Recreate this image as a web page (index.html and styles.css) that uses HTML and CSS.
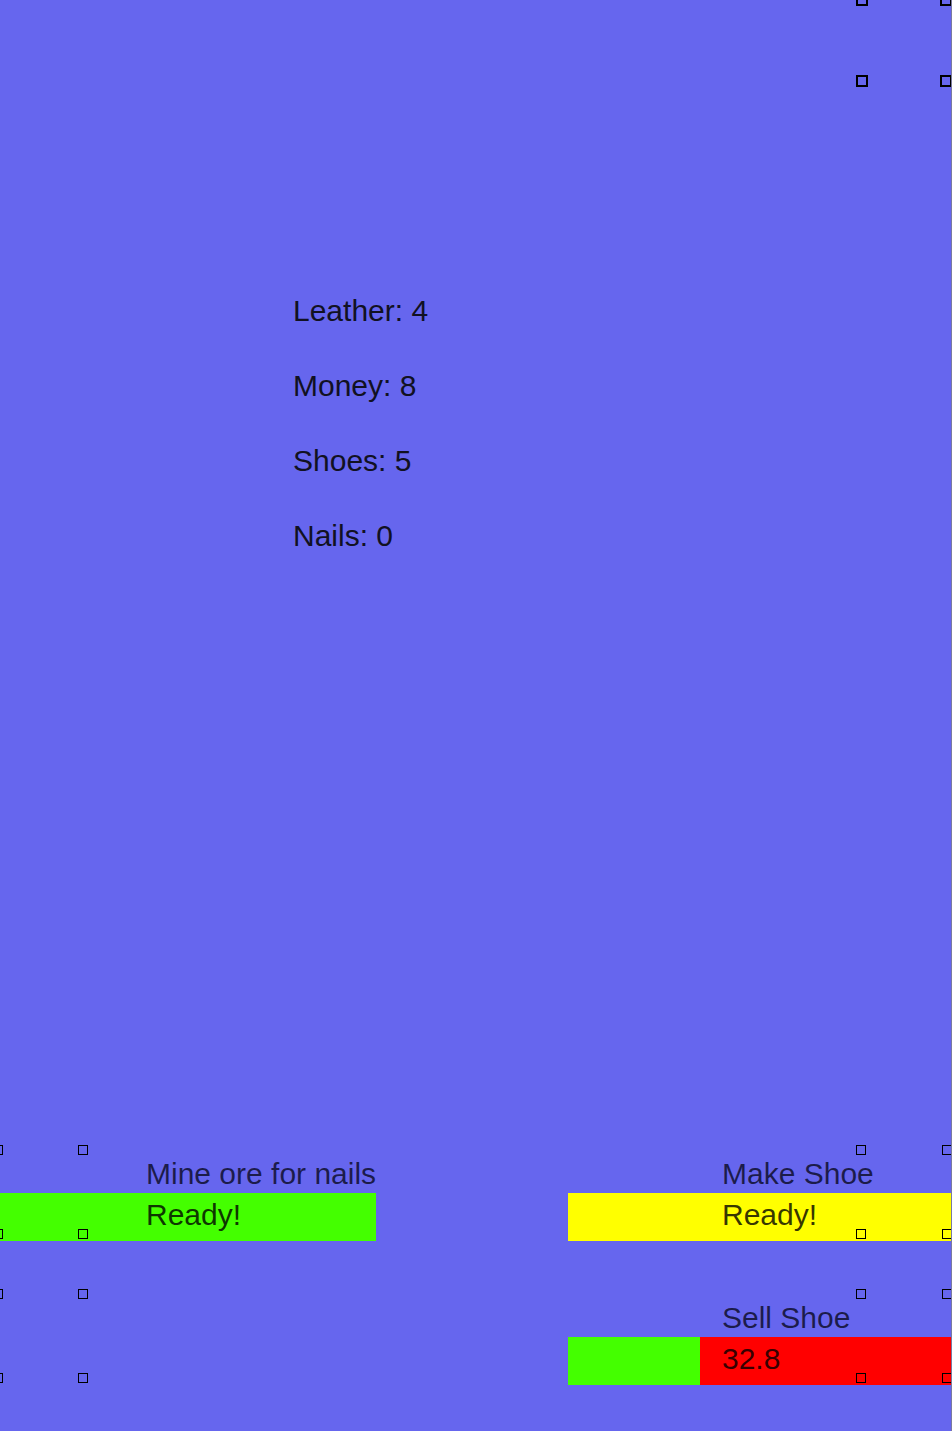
FILE: index.html
```html
<!DOCTYPE html>
<html lang="en">
<head>
<meta charset="utf-8">
<title>Shoe Maker</title>
<link rel="stylesheet" href="styles.css">
</head>
<body>
<div class="page">
  <div class="stats">
    <div class="stat">Leather: 4</div>
    <div class="stat">Money: 8</div>
    <div class="stat">Shoes: 5</div>
    <div class="stat">Nails: 0</div>
  </div>

  <div class="actions">
    <div class="col">
      <div class="widget">
        <div class="label">Mine ore for nails</div>
        <div class="bar bar-green"><span class="bar-text">Ready!</span></div>
      </div>
    </div>
    <div class="col col-right">
      <div class="widget">
        <div class="label">Make Shoe</div>
        <div class="bar bar-yellow"><span class="bar-text">Ready!</span></div>
      </div>
      <div class="widget">
        <div class="label">Sell Shoe</div>
        <div class="bar bar-red">
          <div class="fill" style="width: 34.4%"></div>
          <span class="bar-text">32.8</span>
        </div>
      </div>
    </div>
  </div>

  <div class="grp grp-top big"><i class="h tl"></i><i class="h tr"></i><i class="h bl"></i><i class="h br"></i></div>
  <div class="grp grp-l1"><i class="h tl"></i><i class="h tr"></i><i class="h bl"></i><i class="h br"></i></div>
  <div class="grp grp-l2"><i class="h tl"></i><i class="h tr"></i><i class="h bl"></i><i class="h br"></i></div>
  <div class="grp grp-r1"><i class="h tl"></i><i class="h tr"></i><i class="h bl"></i><i class="h br"></i></div>
  <div class="grp grp-r2"><i class="h tl"></i><i class="h tr"></i><i class="h bl"></i><i class="h br"></i></div>
</div>
</body>
</html>
```
FILE: styles.css
```css
html, body {
  margin: 0;
  padding: 0;
  background: #6666ee;
}
body {
  font-family: "Liberation Sans", Arial, sans-serif;
  overflow: hidden;
}
.page {
  position: relative;
  width: 952px;
  height: 1431px;
  box-sizing: border-box;
  border-right: 1px solid #7a7aa0;
  display: flex;
  flex-direction: column;
  overflow: hidden;
}
.stats {
  display: flex;
  flex-direction: column;
  gap: 30px;
  padding-top: 288px;
  padding-left: 293px;
}
.stat {
  font-size: 30px;
  line-height: 45px;
  color: #111122;
}
.actions {
  margin-top: auto;
  margin-left: -8px;
  width: 960px;
  padding-bottom: 46px;
  display: flex;
  justify-content: space-between;
  align-items: flex-start;
}
.col {
  width: 384px;
  display: flex;
  flex-direction: column;
  gap: 59px;
}
.widget {
  display: flex;
  flex-direction: column;
  gap: 1px;
}
.label {
  font-size: 30px;
  line-height: 36px;
  padding-left: 154px;
  color: rgba(0, 0, 10, 0.72);
  white-space: nowrap;
}
.bar {
  position: relative;
  height: 48px;
  font-size: 30px;
  line-height: 44px;
  display: flex;
}
.bar-green { background: #44ff00; }
.bar-yellow { background: #ffff00; }
.bar-red { background: #ff0000; }
.fill {
  position: absolute;
  left: 0;
  top: 0;
  bottom: 0;
  background: #44ff00;
}
.bar-text {
  position: relative;
  padding-left: 154px;
  color: rgba(0, 0, 0, 0.8);
}

/* resize handles overlaying the canvas */
.grp {
  position: absolute;
}
.grp-top { left: 862px; top: 0; width: 84px; height: 81px; }
.grp-l1 { left: -2px; top: 1150px; width: 85px; height: 84px; }
.grp-l2 { left: -2px; top: 1294px; width: 85px; height: 84px; }
.grp-r1 { left: 861px; top: 1150px; width: 86px; height: 84px; }
.grp-r2 { left: 861px; top: 1294px; width: 86px; height: 84px; }
.h {
  position: absolute;
  width: 10px;
  height: 10px;
  box-sizing: border-box;
  border: 1px solid #000;
}
.tl { left: -5px; top: -5px; }
.tr { right: -5px; top: -5px; }
.bl { left: -5px; bottom: -5px; }
.br { right: -5px; bottom: -5px; }
.big .h {
  width: 12px;
  height: 12px;
  border-width: 2px;
}
.big .tl { left: -6px; top: -6px; }
.big .tr { right: -6px; top: -6px; }
.big .bl { left: -6px; bottom: -6px; }
.big .br { right: -6px; bottom: -6px; }
```
